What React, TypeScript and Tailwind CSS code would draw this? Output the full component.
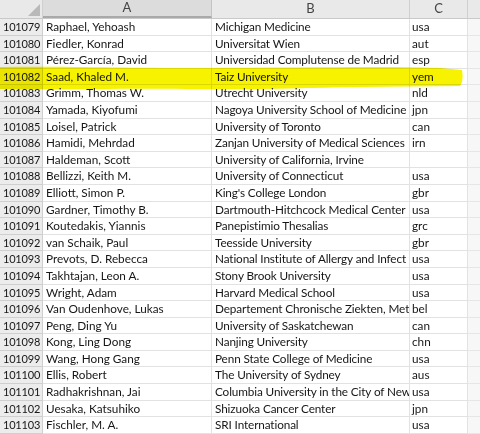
import React from 'react';

type Row = { id: string; name: string; org: string; cc: string };

const rows: Row[] = [
  { id: '101079', name: 'Raphael, Yehoash', org: 'Michigan Medicine', cc: 'usa' },
  { id: '101080', name: 'Fiedler, Konrad', org: 'Universitat Wien', cc: 'aut' },
  { id: '101081', name: 'Pérez-García, David', org: 'Universidad Complutense de Madrid', cc: 'esp' },
  { id: '101082', name: 'Saad, Khaled M.', org: 'Taiz University', cc: 'yem' },
  { id: '101083', name: 'Grimm, Thomas W.', org: 'Utrecht University', cc: 'nld' },
  { id: '101084', name: 'Yamada, Kiyofumi', org: 'Nagoya University School of Medicine', cc: 'jpn' },
  { id: '101085', name: 'Loisel, Patrick', org: 'University of Toronto', cc: 'can' },
  { id: '101086', name: 'Hamidi, Mehrdad', org: 'Zanjan University of Medical Sciences', cc: 'irn' },
  { id: '101087', name: 'Haldeman, Scott', org: 'University of California, Irvine', cc: '' },
  { id: '101088', name: 'Bellizzi, Keith M.', org: 'University of Connecticut', cc: 'usa' },
  { id: '101089', name: 'Elliott, Simon P.', org: "King's College London", cc: 'gbr' },
  { id: '101090', name: 'Gardner, Timothy B.', org: 'Dartmouth-Hitchcock Medical Center', cc: 'usa' },
  { id: '101091', name: 'Koutedakis, Yiannis', org: 'Panepistimio Thesalias', cc: 'grc' },
  { id: '101092', name: 'van Schaik, Paul', org: 'Teesside University', cc: 'gbr' },
  { id: '101093', name: 'Prevots, D. Rebecca', org: 'National Institute of Allergy and Infect', cc: 'usa' },
  { id: '101094', name: 'Takhtajan, Leon A.', org: 'Stony Brook University', cc: 'usa' },
  { id: '101095', name: 'Wright, Adam', org: 'Harvard Medical School', cc: 'usa' },
  { id: '101096', name: 'Van Oudenhove, Lukas', org: 'Departement Chronische Ziekten, Met', cc: 'bel' },
  { id: '101097', name: 'Peng, Ding Yu', org: 'University of Saskatchewan', cc: 'can' },
  { id: '101098', name: 'Kong, Ling Dong', org: 'Nanjing University', cc: 'chn' },
  { id: '101099', name: 'Wang, Hong Gang', org: 'Penn State College of Medicine', cc: 'usa' },
  { id: '101100', name: 'Ellis, Robert', org: 'The University of Sydney', cc: 'aus' },
  { id: '101101', name: 'Radhakrishnan, Jai', org: 'Columbia University in the City of New', cc: 'usa' },
  { id: '101102', name: 'Uesaka, Katsuhiko', org: 'Shizuoka Cancer Center', cc: 'jpn' },
  { id: '101103', name: 'Fischler, M. A.', org: 'SRI International', cc: 'usa' },
];

export default function App() {
  return (
    <div
      className="relative w-[480px] h-[434px] overflow-hidden bg-[#f7f7f7] text-[#161616]"
      style={{ fontFamily: 'Lato, "Open Sans", sans-serif' }}
    >
      {/* column headers */}
      <div className="flex h-[19px] bg-[#e9e9e9] border-b border-[#c9c9c9] text-[13px] text-[#444]">
        <div className="w-[43px] flex items-end justify-end pr-[2px] pb-[2px] border-r border-[#cfcfcf]">
          <div className="w-0 h-0 border-l-[12px] border-l-transparent border-b-[12px] border-b-[#b9b9b9]" />
        </div>
        <div className="w-[169px] flex items-center justify-center bg-[#dcdcdc] border-r border-[#c4c4c4] border-b-2 border-b-[#a9a9a9]">A</div>
        <div className="w-[198px] flex items-center justify-center border-r border-[#cfcfcf]">B</div>
        <div className="w-[58px] flex items-center justify-center border-r border-[#cfcfcf]">C</div>
        <div className="flex-1" />
      </div>

      {rows.map((r) => {
        const hl = r.id === '101082';
        return (
          <div key={r.id} className="flex h-[16.6px] text-[11.75px] leading-[16px]">
            <div
              className={`w-[43px] pl-[3px] text-[11px] tracking-[-0.2px] border-r border-b border-[#cfcfcf] ${
                hl ? 'bg-[#f4f000]' : 'bg-[#ececec]'
              }`}
            >
              {r.id}
            </div>
            <div className="w-[169px] pl-[3px] bg-white border-r border-b border-[#e2e2e2] whitespace-nowrap">
              {r.name}
            </div>
            <div className="w-[198px] pl-[3px] bg-white border-r border-b border-[#e2e2e2] whitespace-nowrap overflow-hidden tracking-[-0.12px]">
              {r.org}
            </div>
            <div className="w-[58px] pl-[2px] bg-white border-r border-b border-[#e2e2e2]">{r.cc}</div>
            <div className="flex-1 bg-[#f7f7f7] border-b border-[#e6e6e6]" />
          </div>
        );
      })}

      {/* highlighter stroke */}
      <svg
        className="absolute left-0 top-[64px] pointer-events-none mix-blend-multiply"
        width="480"
        height="30"
        viewBox="0 0 480 30"
      >
        <path
          d="M0 3 C60 2 120 4 200 4 C300 4 380 2 440 4 L462 6 C463 12 463 18 460 22 L360 23 C300 24 250 26 200 25 C120 24 60 26 0 25 Z"
          fill="#f6f200"
        />
      </svg>
    </div>
  );
}
